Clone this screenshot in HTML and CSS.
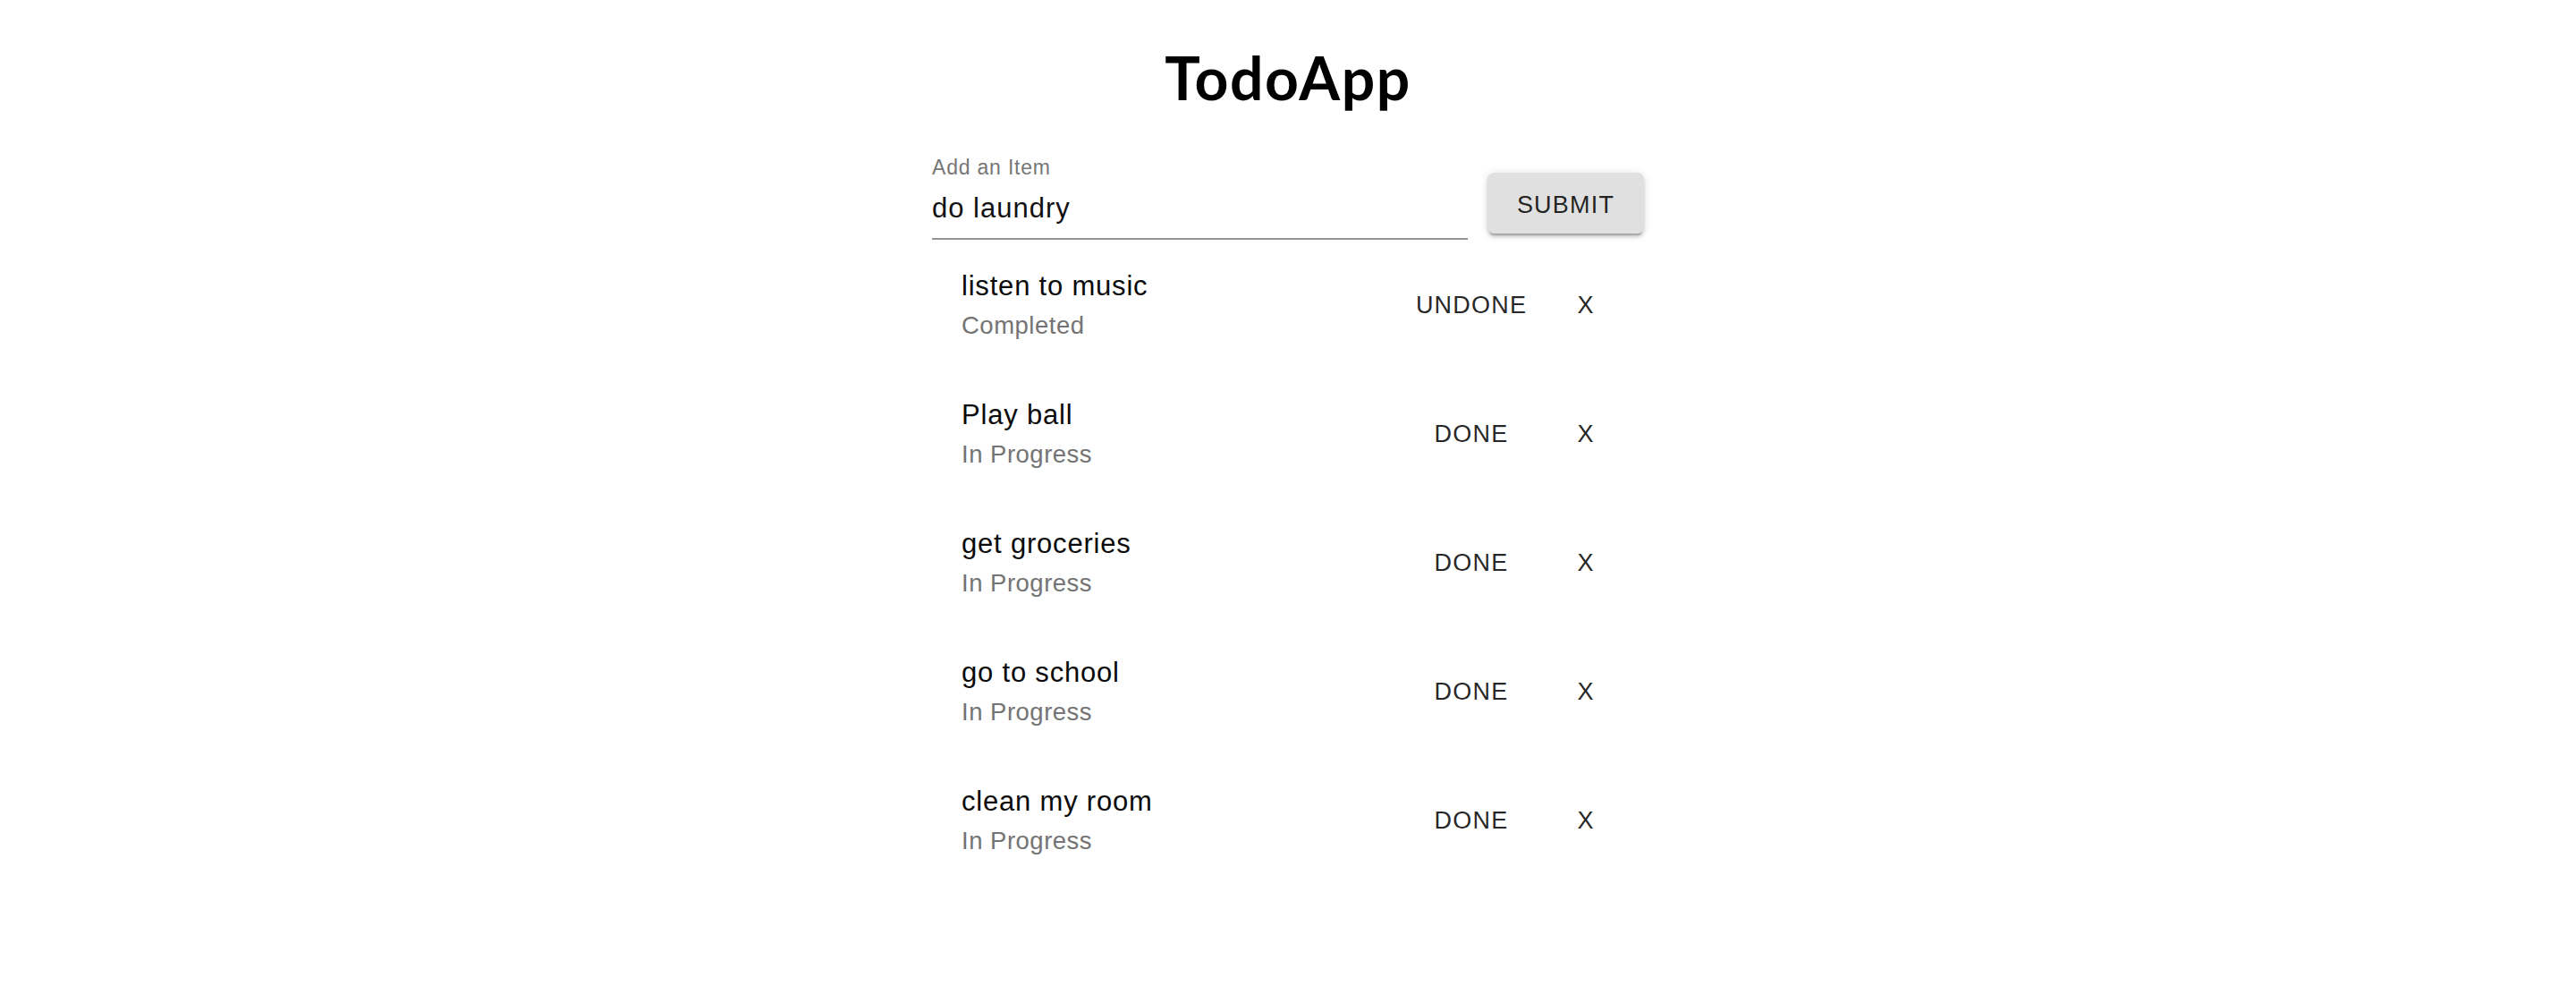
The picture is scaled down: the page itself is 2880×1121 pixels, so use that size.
FILE: index.html
```html
<!DOCTYPE html>
<html lang="en">
<head>
<meta charset="utf-8">
<title>TodoApp</title>
<link rel="stylesheet" href="styles.css">
</head>
<body>
<main class="app">
  <h1 class="title">TodoApp</h1>
  <form class="add-form">
    <label class="field">
      <span class="field-label">Add an Item</span>
      <input class="field-input" type="text" value="do laundry">
    </label>
    <button type="button" class="submit-btn">Submit</button>
  </form>
  <ul class="todo-list">
    <li class="todo-item">
      <div class="todo-text">
        <span class="todo-primary">listen to music</span>
        <span class="todo-secondary">Completed</span>
      </div>
      <div class="todo-action"><button type="button" class="text-btn">Undone</button></div>
      <div class="todo-remove"><button type="button" class="text-btn">X</button></div>
    </li>
    <li class="todo-item">
      <div class="todo-text">
        <span class="todo-primary">Play ball</span>
        <span class="todo-secondary">In Progress</span>
      </div>
      <div class="todo-action"><button type="button" class="text-btn">Done</button></div>
      <div class="todo-remove"><button type="button" class="text-btn">X</button></div>
    </li>
    <li class="todo-item">
      <div class="todo-text">
        <span class="todo-primary">get groceries</span>
        <span class="todo-secondary">In Progress</span>
      </div>
      <div class="todo-action"><button type="button" class="text-btn">Done</button></div>
      <div class="todo-remove"><button type="button" class="text-btn">X</button></div>
    </li>
    <li class="todo-item">
      <div class="todo-text">
        <span class="todo-primary">go to school</span>
        <span class="todo-secondary">In Progress</span>
      </div>
      <div class="todo-action"><button type="button" class="text-btn">Done</button></div>
      <div class="todo-remove"><button type="button" class="text-btn">X</button></div>
    </li>
    <li class="todo-item">
      <div class="todo-text">
        <span class="todo-primary">clean my room</span>
        <span class="todo-secondary">In Progress</span>
      </div>
      <div class="todo-action"><button type="button" class="text-btn">Done</button></div>
      <div class="todo-remove"><button type="button" class="text-btn">X</button></div>
    </li>
  </ul>
</main>
</body>
</html>
```

FILE: styles.css
```css
* {
  box-sizing: border-box;
}

html, body {
  margin: 0;
  padding: 0;
  background: #ffffff;
}

body {
  font-family: "Liberation Sans", Arial, Helvetica, sans-serif;
  color: rgba(0, 0, 0, 0.87);
}

.app {
  width: 796px;
  margin: 0 auto;
  display: flex;
  flex-direction: column;
}

.title {
  margin: 48px 0 0;
  font-family: Lato, "Open Sans", sans-serif;
  font-weight: 700;
  font-size: 66px;
  line-height: 77px;
  letter-spacing: 1.5px;
  text-align: center;
  color: #000;
}

.add-form {
  margin: 49px 0 0;
  display: flex;
  align-items: flex-start;
  gap: 22px;
}

.field {
  flex: 1;
  display: flex;
  flex-direction: column;
}

.field-label {
  font-size: 23px;
  line-height: 26px;
  letter-spacing: 0.8px;
  color: #767676;
}

.field-input {
  display: block;
  width: 100%;
  height: 68px;
  padding: 11px 0 12px;
  border: none;
  border-bottom: 2px solid #949494;
  outline: none;
  background: transparent;
  font-family: "Liberation Sans", Arial, Helvetica, sans-serif;
  font-size: 31px;
  line-height: 43px;
  letter-spacing: 1px;
  color: #111;
}

.submit-btn {
  margin-top: 19px;
  width: 175px;
  height: 68px;
  padding: 4px 0 0;
  border: none;
  border-radius: 7.5px;
  background: #e0e0e0;
  box-shadow: 0 5.6px 1.9px -3.75px rgba(0, 0, 0, 0.2),
              0 3.75px 3.75px 0 rgba(0, 0, 0, 0.14),
              0 1.9px 9.4px 0 rgba(0, 0, 0, 0.12);
  font-family: "Liberation Sans", Arial, Helvetica, sans-serif;
  font-size: 27px;
  line-height: 45px;
  letter-spacing: 1.2px;
  text-transform: uppercase;
  color: rgba(0, 0, 0, 0.87);
  cursor: pointer;
}

.todo-list {
  list-style: none;
  margin: 1px 0 0;
  padding: 0;
}

.todo-item {
  height: 144px;
  padding: 0 27px 0 33px;
  display: grid;
  grid-template-columns: 1fr 180px 76px;
  align-items: center;
}

.todo-text {
  display: flex;
  flex-direction: column;
}

.todo-primary {
  font-size: 31px;
  line-height: 45px;
  letter-spacing: 0.8px;
  color: #0a0a0a;
}

.todo-secondary {
  font-size: 27.5px;
  line-height: 43px;
  letter-spacing: 0.5px;
  color: #747474;
}

.todo-action,
.todo-remove {
  display: flex;
  justify-content: center;
}

.text-btn {
  padding: 0;
  border: none;
  background: transparent;
  font-family: "Liberation Sans", Arial, Helvetica, sans-serif;
  font-size: 27px;
  line-height: 45px;
  letter-spacing: 1.2px;
  text-transform: uppercase;
  color: rgba(0, 0, 0, 0.87);
  cursor: pointer;
}
```
